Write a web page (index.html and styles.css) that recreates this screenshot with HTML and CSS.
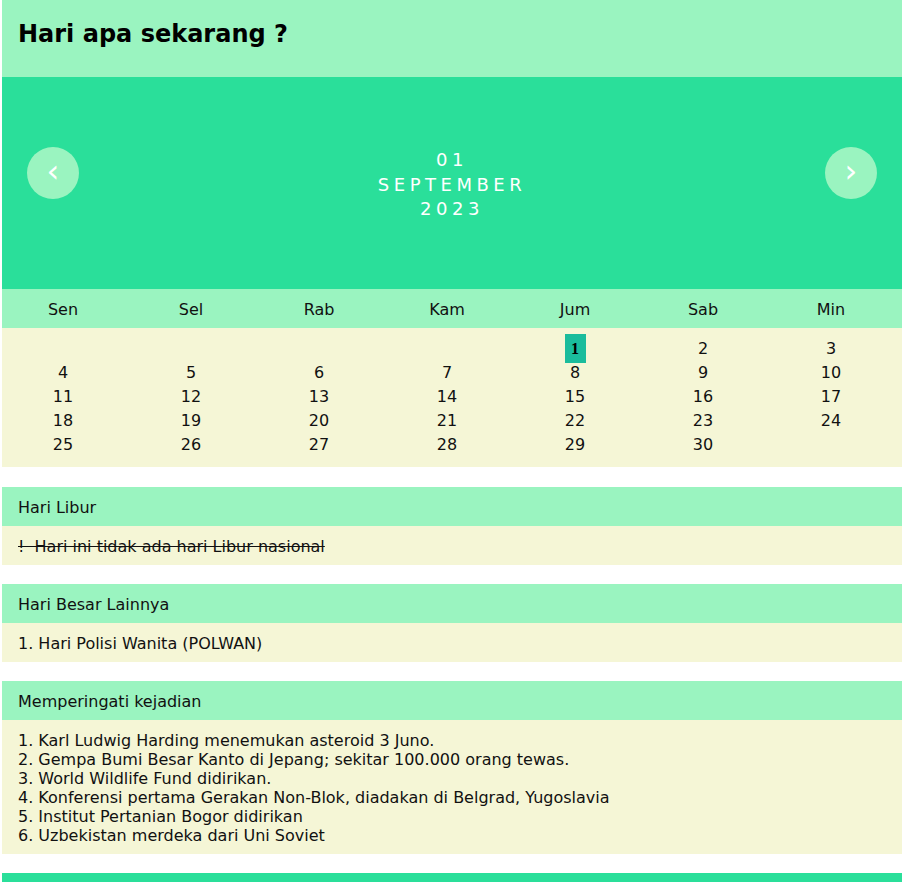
FILE: index.html
```html
<!DOCTYPE html>
<html lang="id">
<head>
    <meta charset="UTF-8">
    <meta name="viewport" content="width=device-width, initial-scale=1.0">
    <title>Hari apa sekarang ?</title>
    <link rel="stylesheet" href="styles.css">
</head>
<body>
    <div id="app">
        <header class="top">
            <h1>Hari apa sekarang ?</h1>
        </header>

        <div class="hero">
            <button class="nav-btn" id="prev-btn">&lsaquo;</button>
            <div class="date-label">
                <div class="day">01</div>
                <div class="month">SEPTEMBER</div>
                <div class="year">2023</div>
            </div>
            <button class="nav-btn" id="next-btn">&rsaquo;</button>
        </div>

        <div class="calendar">
            <div class="week-head">
                <div>Sen</div>
                <div>Sel</div>
                <div>Rab</div>
                <div>Kam</div>
                <div>Jum</div>
                <div>Sab</div>
                <div>Min</div>
            </div>
            <div class="dates" id="dates"></div>
        </div>

        <section class="panel">
            <div class="panel-title">Hari Libur</div>
            <div class="panel-body"><s>!&nbsp; Hari ini tidak ada hari Libur nasional</s></div>
        </section>

        <section class="panel">
            <div class="panel-title">Hari Besar Lainnya</div>
            <div class="panel-body">1. Hari Polisi Wanita (POLWAN)</div>
        </section>

        <section class="panel">
            <div class="panel-title">Memperingati kejadian</div>
            <div class="panel-body">
                1. Karl Ludwig Harding menemukan asteroid 3 Juno.<br>
                2. Gempa Bumi Besar Kanto di Jepang; sekitar 100.000 orang tewas.<br>
                3. World Wildlife Fund didirikan.<br>
                4. Konferensi pertama Gerakan Non-Blok, diadakan di Belgrad, Yugoslavia<br>
                5. Institut Pertanian Bogor didirikan<br>
                6. Uzbekistan merdeka dari Uni Soviet
            </div>
        </section>

        <footer class="bottom"></footer>
    </div>

    <script>
        // isi tanggal bulan September 2023 (mulai hari Jumat)
        const datesEl = document.getElementById('dates');
        const offset = 4;
        const totalDays = 30;
        const today = 1;

        for (let i = 0; i < offset; i++) {
            datesEl.appendChild(document.createElement('div'));
        }
        for (let d = 1; d <= totalDays; d++) {
            const cell = document.createElement('div');
            if (d === today) {
                const b = document.createElement('b');
                b.className = 'today';
                b.textContent = d;
                cell.appendChild(b);
            } else {
                cell.textContent = d;
            }
            datesEl.appendChild(cell);
        }
    </script>
</body>
</html>
```

FILE: styles.css
```css
body {
    margin: 0;
    font-family: "DejaVu Sans", sans-serif;
    font-size: 16px;
    color: #111;
    background-color: #fff;
}

#app {
    width: 900px;
    margin: 0 2px;
}

.top {
    height: 77px;
    background-color: #9af4c0;
    padding: 0 16px;
    box-sizing: border-box;
}

.top h1 {
    margin: 0;
    padding-top: 20px;
    font-size: 24px;
    font-weight: bold;
    color: #000;
}

.hero {
    height: 212px;
    background-color: #2adf9a;
    display: flex;
    align-items: center;
    justify-content: space-between;
    padding: 0 25px;
}

.nav-btn {
    width: 52px;
    height: 52px;
    margin-bottom: 21px;
    border-radius: 50%;
    border: none;
    background-color: #9af4c0;
    color: #fff;
    font-family: "DejaVu Sans", sans-serif;
    font-size: 32px;
    line-height: 1;
    padding: 0 0 4px;
    cursor: pointer;
}

.date-label {
    text-align: center;
    color: #fff;
    font-size: 18px;
    letter-spacing: 4.5px;
    line-height: 24.5px;
    padding-top: 4px;
}

.week-head,
.dates {
    display: grid;
    grid-template-columns: repeat(7, 128px);
    text-align: center;
}

.week-head div,
.dates div {
    padding-right: 6px;
}

.week-head {
    background-color: #9af4c0;
    padding: 11px 0 9px;
    line-height: 19px;
}

.dates {
    background-color: #f5f6d6;
    padding: 8px 0 11px;
}

.dates div {
    height: 24px;
    display: flex;
    justify-content: center;
    align-items: center;
}

.today {
    display: inline-block;
    width: 21px;
    height: 29px;
    line-height: 29px;
    flex-shrink: 0;
    background-color: #1abc9c;
    font-family: "Liberation Serif", serif;
    color: #000;
}

.panel {
    margin-top: 20px;
}

.panel + .panel {
    margin-top: 19px;
}

.panel-title {
    background-color: #9af4c0;
    padding: 11px 16px 9px;
    line-height: 19px;
}

.panel-body {
    background-color: #f5f6d6;
    padding: 11px 16px 9px;
    line-height: 19px;
}

.bottom {
    margin-top: 19px;
    height: 60px;
    background-color: #2adf9a;
}
```
